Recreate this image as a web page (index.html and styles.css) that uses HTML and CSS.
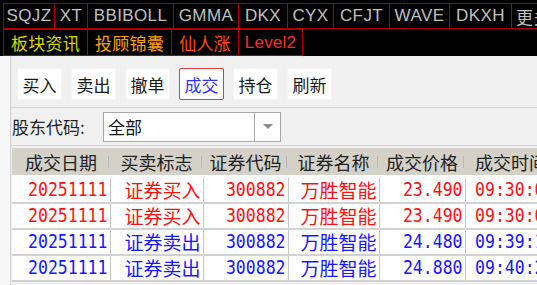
FILE: index.html
```html
<!DOCTYPE html>
<html>
<head>
<meta charset="UTF-8">
<title>成交查询</title>
<link rel="stylesheet" href="styles.css">
</head>
<body>
	<div id="topbar">
		<div class="tabs">
			<span class="tab w52">SQJZ</span>
			<span class="tab w34">XT</span>
			<span class="tab w87">BBIBOLL</span>
			<span class="tab w66">GMMA</span>
			<span class="tab w50">DKX</span>
			<span class="tab w47">CYX</span>
			<span class="tab w57">CFJT</span>
			<span class="tab w61">WAVE</span>
			<span class="tab w63">DKXH</span>
			<span class="tab w60 more">更多</span>
		</div>
		<div class="tabs tabs-cn">
			<span class="tab w85 c-yellow">板块资讯</span>
			<span class="tab w85 c-orange">投顾锦囊</span>
			<span class="tab w68 c-orangered">仙人涨</span>
			<span class="tab w65 c-red lv2">Level2</span>
		</div>
	</div>

	<div id="main">
		<div class="strip"></div>
		<div class="panel">
			<div class="toolbar">
				<button class="btn">买入</button>
				<button class="btn">卖出</button>
				<button class="btn">撤单</button>
				<button class="btn active">成交</button>
				<button class="btn">持仓</button>
				<button class="btn">刷新</button>
			</div>

			<div class="filter">
				<label class="title">股东代码:</label>
				<div class="combo">
					<span class="combo-text">全部</span>
					<span class="combo-arrow"></span>
				</div>
			</div>

			<table class="grid">
				<colgroup>
					<col class="c1"><col class="c2"><col class="c3"><col class="c4"><col class="c5"><col class="c6">
				</colgroup>
				<thead>
					<tr>
						<th>成交日期</th>
						<th>买卖标志</th>
						<th>证券代码</th>
						<th>证券名称</th>
						<th>成交价格</th>
						<th>成交时间</th>
					</tr>
				</thead>
				<tbody>
					<tr class="buy">
						<td><span class="num">20251111</span></td>
						<td class="cn">证券买入</td>
						<td><span class="num">300882</span></td>
						<td class="cn">万胜智能</td>
						<td><span class="num">23.490</span></td>
						<td><span class="num">09:30:05</span></td>
					</tr>
					<tr class="buy">
						<td><span class="num">20251111</span></td>
						<td class="cn">证券买入</td>
						<td><span class="num">300882</span></td>
						<td class="cn">万胜智能</td>
						<td><span class="num">23.490</span></td>
						<td><span class="num">09:30:05</span></td>
					</tr>
					<tr class="sell">
						<td><span class="num">20251111</span></td>
						<td class="cn">证券卖出</td>
						<td><span class="num">300882</span></td>
						<td class="cn">万胜智能</td>
						<td><span class="num">24.480</span></td>
						<td><span class="num">09:39:12</span></td>
					</tr>
					<tr class="sell">
						<td><span class="num">20251111</span></td>
						<td class="cn">证券卖出</td>
						<td><span class="num">300882</span></td>
						<td class="cn">万胜智能</td>
						<td><span class="num">24.880</span></td>
						<td><span class="num">09:40:27</span></td>
					</tr>
				</tbody>
			</table>
		</div>
	</div>
</body>
</html>
```

FILE: styles.css
```css
	body {
		margin: 0;
		padding: 0;
		width: 537px;
		height: 285px;
		overflow: hidden;
		font-family: "Liberation Sans", "Noto Sans CJK SC", sans-serif;
		background-color: #f0f0f0;
}

	/* top black tab bar */
	#topbar {
		height: 56px;
		background-color: #000;
		overflow: hidden;
}

	.tabs {
		display: flex;
		padding: 3px 0 0 3px;
		white-space: nowrap;
}

	.tabs-cn {
		padding-top: 0;
}

	.tab {
		box-sizing: border-box;
		flex: none;
		height: 26px;
		border: 1px solid #b00000;
		display: flex;
		align-items: center;
		justify-content: center;
		color: #c0c0c0;
		font-size: 17px;
		letter-spacing: 0.4px;
		overflow: hidden;
}

	.tab + .tab {
		margin-left: -1px;
}

	.tabs-cn .tab {
		height: 27px;
		font-family: "Noto Sans CJK SC", sans-serif;
		font-size: 17px;
		letter-spacing: 0.2px;
}

	.tabs-cn .tab.lv2 {
		font-family: "Liberation Sans", sans-serif;
}

	.more {
		justify-content: flex-start;
		padding-left: 4px;
		font-family: "Noto Sans CJK SC", sans-serif;
}

	.w34 { width: 34px; }
	.w47 { width: 47px; }
	.w50 { width: 50px; }
	.w52 { width: 52px; }
	.w57 { width: 57px; }
	.w60 { width: 60px; }
	.w61 { width: 61px; }
	.w63 { width: 63px; }
	.w65 { width: 65px; }
	.w66 { width: 66px; }
	.w68 { width: 68px; }
	.w85 { width: 85px; }
	.w87 { width: 87px; }

	.c-yellow { color: #d8d800; }
	.c-orange { color: #ffa000; }
	.c-orangered { color: #ff4c00; }
	.c-red { color: #ff2a2a; }

	/* lower panel */
	#main {
		display: flex;
		height: 229px;
}

	.strip {
		width: 10px;
		flex: none;
		background-color: #f7f7f7;
		border-right: 1px solid #cfcfcf;
}

	.panel {
		flex: 1;
		min-width: 0;
		overflow: hidden;
		background-color: #f0f0f0;
}

	.toolbar {
		box-sizing: border-box;
		height: 52px;
		display: flex;
		gap: 9px;
		padding: 12px 0 0 6px;
		border-bottom: 1px solid #d4d4d4;
}

	.btn {
		width: 45px;
		height: 32px;
		padding: 0;
		background-color: #fff;
		border: 1px solid #f4f4f4;
		border-radius: 2px;
		font-family: "Noto Sans CJK SC", sans-serif;
		font-size: 17px;
		color: #1a1a1a;
}

	.btn.active {
		border-color: #e23a3a;
		color: #3232ff;
}

	.filter {
		box-sizing: border-box;
		height: 38px;
		display: flex;
		align-items: center;
		padding: 0 0 0 1px;
		border-bottom: 1px solid #d4d4d4;
}

	label.title {
		width: 91px;
		font-family: "Noto Sans CJK SC", sans-serif;
		font-size: 17px;
		color: #222;
}

	.combo {
		box-sizing: border-box;
		width: 178px;
		height: 30px;
		display: flex;
		background-color: #fff;
		border: 1px solid #a8a8a8;
}

	.combo-text {
		flex: 1;
		padding-left: 4px;
		font-family: "Noto Sans CJK SC", sans-serif;
		font-size: 17px;
		line-height: 28px;
		color: #111;
}

	.combo-arrow {
		width: 25px;
		border-left: 1px solid #a8a8a8;
		display: flex;
		align-items: center;
		justify-content: center;
}

	.combo-arrow::after {
		content: "";
		border-left: 5px solid transparent;
		border-right: 5px solid transparent;
		border-top: 5px solid #8a8a8a;
}

	/* trade grid */
	table.grid {
		margin: 2px 0 0 1px;
		width: 545px;
		table-layout: fixed;
		border-collapse: collapse;
		background-color: #fff;
}

	col.c1 { width: 98px; }
	col.c2 { width: 93px; }
	col.c3 { width: 85px; }
	col.c4 { width: 91px; }
	col.c5 { width: 86px; }
	col.c6 { width: 92px; }

	.grid th {
		height: 27px;
		padding: 0;
		background-color: #d4d1c9;
		font-family: "Noto Sans CJK SC", sans-serif;
		font-size: 18px;
		font-weight: normal;
		color: #222;
		white-space: nowrap;
		background-image: linear-gradient(#b8b8b8, #b8b8b8);
		background-size: 1px 12px;
		background-position: right 1px center;
		background-repeat: no-repeat;
		border-bottom: 3px solid #fff;
}

	.grid td {
		box-sizing: border-box;
		height: 26px;
		padding: 0 2px 0 0;
		text-align: right;
		white-space: nowrap;
		overflow: hidden;
		border-right: 1px solid #c4c4c4;
		border-bottom: 2px solid #d2d2d2;
		font-size: 19px;
		line-height: 22px;
}

	.grid tbody tr:first-child td {
		border-top: 2px solid #d2d2d2;
}

	.grid td.cn {
		font-family: "Noto Sans CJK SC", sans-serif;
}

	.grid td .num {
		display: inline-block;
		font-family: "DejaVu Sans Mono", monospace;
		font-size: 16.5px;
		transform: scaleY(1.2);
}

	tr.buy td { color: #ff1010; }
	tr.sell td { color: #1616ff; }
```
